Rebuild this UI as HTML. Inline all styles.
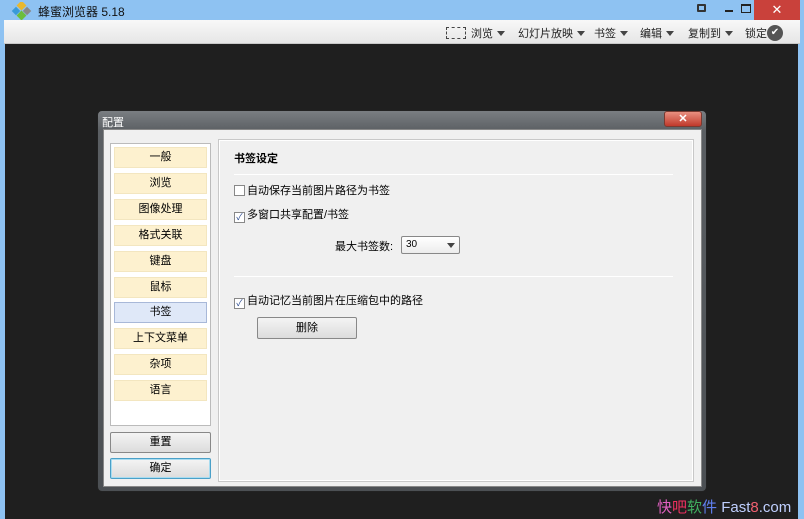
<!DOCTYPE html>
<html><head><meta charset="utf-8"><style>
*{margin:0;padding:0;box-sizing:border-box}
body{width:804px;height:519px;overflow:hidden;background:#1f1f1f;font-family:"Liberation Sans","Noto Sans CJK SC",sans-serif;font-size:11px;color:#000;position:relative}
.abs{position:absolute}
#title{left:0;top:0;width:804px;height:20px;background:#8ec2f2}
#tool{left:4px;top:20px;width:796px;height:24px;background:linear-gradient(#f8f8f8,#e6e6e6);border-bottom:1px solid #c8c8c8}
#lb{left:0;top:20px;width:5px;height:499px;background:#8ec2f2}
#rb{left:798px;top:20px;width:6px;height:499px;background:#8ec2f2}
.tb{top:25px;font-size:11px;color:#222}
.tri{display:inline-block;width:0;height:0;border-left:4px solid transparent;border-right:4px solid transparent;border-top:5px solid #444;margin-left:4px;vertical-align:1px}
#dlg{left:97px;top:110px;width:610px;height:382px;background:linear-gradient(#7a7e82,#5b5f63 20px,#4c5054);border:1px solid #222;border-radius:5px}
#client{left:103px;top:129px;width:599px;height:358px;background:#f0f0f0;border:1px solid #888}
#lp{left:110px;top:143px;width:101px;height:283px;background:#fff;border:1px solid #bbb}
.it{left:114px;width:93px;height:21px;background:#fdf1cf;border:1px solid #f3e6c0;text-align:center;line-height:19px;font-size:11px}
#rp{left:219px;top:140px;width:474px;height:341px;border:1px solid #fff;outline:1px solid #c8c8c8}
.btn{background:linear-gradient(#f4f4f4,#dcdcdc);border:1px solid #888;border-radius:2px;text-align:center;font-size:11px}
.cb{display:inline-block;width:11px;height:11px;border:1px solid #888;background:#fff;vertical-align:-2px;margin-right:2px;font-size:9px;line-height:9px;text-align:center;color:#2a4a90}
.sep{height:1px;background:#bbb;border-bottom:1px solid #fff}
</style></head><body>
<div class="abs" id="title"></div>
<div class="abs" id="lb"></div><div class="abs" id="rb"></div>
<svg class="abs" style="left:11px;top:2px" width="22" height="20"><rect x="7" y="0" width="7" height="7" fill="#e8b830" transform="rotate(45 10.5 3.5)"/><rect x="2" y="6" width="6" height="6" fill="#3a9ad8" transform="rotate(45 5 9)"/><rect x="13" y="6" width="6" height="6" fill="#888" transform="rotate(45 16 9)"/><rect x="7" y="10" width="7" height="7" fill="#6cbd3c" transform="rotate(45 10.5 13.5)"/></svg>
<div class="abs" style="left:38px;top:3px;font-size:12px;color:#111">蜂蜜浏览器 5.18</div>
<div class="abs" style="left:697px;top:4px;width:9px;height:8px;border:2px solid #333;border-radius:1px"></div>
<div class="abs" style="left:725px;top:10px;width:8px;height:2px;background:#222"></div>
<div class="abs" style="left:741px;top:4px;width:10px;height:9px;border:1px solid #222;border-top-width:2px"></div>
<div class="abs" style="left:754px;top:0;width:46px;height:20px;background:#c9413b;color:#fff;text-align:center;font-size:13px;line-height:19px">✕</div>
<div class="abs" id="tool"></div>
<div class="abs" style="left:446px;top:27px;width:20px;height:12px;border:1px dashed #444"></div>
<div class="abs tb" style="left:471px">浏览<span class="tri"></span></div>
<div class="abs tb" style="left:518px">幻灯片放映<span class="tri"></span></div>
<div class="abs tb" style="left:594px">书签<span class="tri"></span></div>
<div class="abs tb" style="left:640px">编辑<span class="tri"></span></div>
<div class="abs tb" style="left:688px">复制到<span class="tri"></span></div>
<div class="abs tb" style="left:745px">锁定</div>
<div class="abs" style="left:767px;top:25px;width:16px;height:16px;border-radius:50%;background:#555;color:#fff;font-size:10px;text-align:center;line-height:16px">✔</div>

<div class="abs" id="dlg"></div>
<div class="abs" style="left:102px;top:114px;color:#fff;font-size:11px">配置</div>
<div class="abs" style="left:664px;top:111px;width:38px;height:16px;background:linear-gradient(#e89080,#c0392b);border:1px solid #7a3a30;border-radius:3px;color:#fff;text-align:center;font-size:11px;line-height:14px;font-weight:bold">✕</div>
<div class="abs" id="client"></div>
<div class="abs" id="lp"></div>
<div class="abs it" style="top:147px">一般</div>
<div class="abs it" style="top:173px">浏览</div>
<div class="abs it" style="top:199px">图像处理</div>
<div class="abs it" style="top:225px">格式关联</div>
<div class="abs it" style="top:251px">键盘</div>
<div class="abs it" style="top:277px">鼠标</div>
<div class="abs it" style="top:302px;background:#dfe8f8;border-color:#a8b8d8">书签</div>
<div class="abs it" style="top:328px">上下文菜单</div>
<div class="abs it" style="top:354px">杂项</div>
<div class="abs it" style="top:380px">语言</div>
<div class="abs btn" style="left:110px;top:432px;width:101px;height:21px;line-height:19px">重置</div>
<div class="abs btn" style="left:110px;top:458px;width:101px;height:21px;line-height:19px;border-color:#4aa0c8;box-shadow:inset 0 0 0 1px #a8dcf0">确定</div>
<div class="abs" id="rp"></div>
<div class="abs" style="left:234px;top:150px;font-weight:bold">书签设定</div>
<div class="abs sep" style="left:234px;top:174px;width:439px"></div>
<div class="abs" style="left:234px;top:182px"><span class="cb"></span>自动保存当前图片路径为书签</div>
<div class="abs" style="left:234px;top:206px"><span class="cb">✓</span>多窗口共享配置/书签</div>
<div class="abs" style="left:335px;top:238px">最大书签数:</div>
<div class="abs" style="left:401px;top:236px;width:59px;height:18px;background:linear-gradient(#fff,#ececec);border:1px solid #888;border-radius:2px;padding-left:4px;line-height:16px;font-size:10px">30<span class="tri" style="position:absolute;right:4px;top:6px"></span></div>
<div class="abs sep" style="left:234px;top:276px;width:439px"></div>
<div class="abs" style="left:234px;top:292px"><span class="cb">✓</span>自动记忆当前图片在压缩包中的路径</div>
<div class="abs btn" style="left:257px;top:317px;width:100px;height:22px;line-height:20px">删除</div>
<div class="abs" style="left:657px;top:496px;font-size:15px;letter-spacing:0"><span style="color:#e060c0">快</span><span style="color:#f03060">吧</span><span style="color:#40b060">软</span><span style="color:#6080f0">件</span><span style="color:#c0d0ff"> Fast</span><span style="color:#f06070">8</span><span style="color:#c0d0ff">.com</span></div>
</body></html>
